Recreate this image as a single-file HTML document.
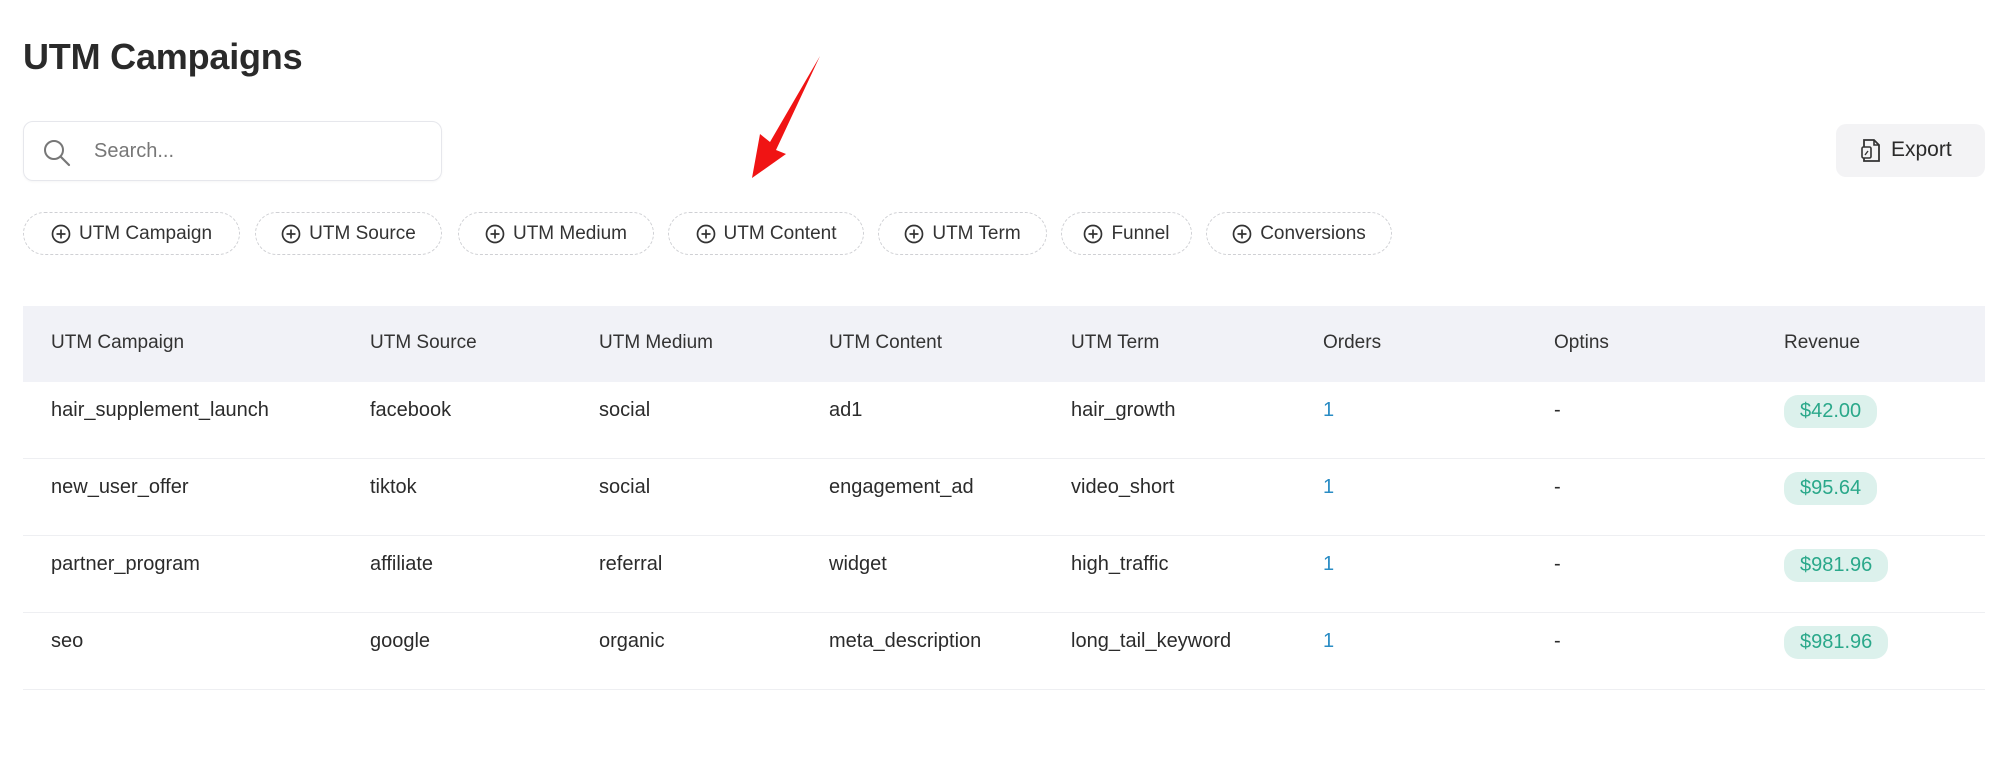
<!DOCTYPE html>
<html><head><meta charset="utf-8"><style>
*{box-sizing:border-box;margin:0;padding:0}
body{width:1999px;height:780px;background:#fff;font-family:"Liberation Sans",Arial,sans-serif;color:#2b2b2b;position:relative;overflow:hidden}
.a{position:absolute}
h1{position:absolute;left:23px;top:36px;font-size:36px;font-weight:700;color:#2a2a2a;letter-spacing:-0.2px}
.search{left:23px;top:121px;width:419px;height:60px;border:1px solid #e6e7ec;border-radius:10px;box-shadow:0 1px 2px rgba(0,0,0,.04)}
.search span{position:absolute;left:70px;top:18px;font-size:20px;color:#777}
.export{left:1836px;top:124px;width:149px;height:53px;background:#f3f3f5;border-radius:10px;font-size:21px;color:#2a2a2a}
.export span{position:absolute;left:55px;top:14px}
.chip{top:212px;height:43px;border:1.5px dashed #cfd0d4;border-radius:22px;font-size:19px;color:#333;display:flex;align-items:center;justify-content:center;gap:8px}
.chip svg{flex:none}
.thead{left:23px;top:306px;width:1962px;height:76px;background:#f1f2f7}
.row{left:23px;width:1962px;border-bottom:1.5px solid #eeeff2}
.c{position:absolute;font-size:20px;color:#2b2b2b;white-space:nowrap}
.h{top:332px;font-size:19px;color:#333}
.blue{color:#2a8cc4}
.pill{background:#dcf1ec;color:#2aa88a;border-radius:14px;padding:5px 16px;font-size:20px}
</style></head><body>
<h1>UTM Campaigns</h1>
<div class="a search">
<svg class="a" style="left:18px;top:16px" width="30" height="30" viewBox="0 0 30 30"><circle cx="12" cy="12" r="9" fill="none" stroke="#777" stroke-width="2"/><line x1="18.5" y1="18.5" x2="27" y2="27" stroke="#777" stroke-width="2.2" stroke-linecap="round"/></svg>
<span>Search...</span></div>
<div class="a export">
<svg class="a" style="left:24px;top:14px" width="22" height="26" viewBox="0 0 22 26"><path d="M4 2h10l5 5v16H4z" fill="none" stroke="#333" stroke-width="1.8"/><path d="M14 2v5h5" fill="none" stroke="#333" stroke-width="1.6"/><rect x="2" y="9" width="9" height="11" rx="1.5" fill="#f3f3f5" stroke="#333" stroke-width="1.6"/><path d="M5 17l3-4" stroke="#333" stroke-width="1.4"/></svg>
<span>Export</span></div>

<svg class="a" style="left:740px;top:50px" width="90" height="135" viewBox="0 0 90 135"><path d="M80 6 L36 100 L46 104 L12 128 L20 84 L30 92 Z" fill="#f01414"/></svg>

<div class="a chip" style="left:23px;width:217px"><svg width="20" height="20" viewBox="0 0 20 20"><circle cx="10" cy="10" r="8.5" fill="none" stroke="#333" stroke-width="1.7"/><path d="M10 5.5v9M5.5 10h9" stroke="#333" stroke-width="1.7"/></svg>UTM Campaign</div>
<div class="a chip" style="left:255px;width:187px"><svg width="20" height="20" viewBox="0 0 20 20"><circle cx="10" cy="10" r="8.5" fill="none" stroke="#333" stroke-width="1.7"/><path d="M10 5.5v9M5.5 10h9" stroke="#333" stroke-width="1.7"/></svg>UTM Source</div>
<div class="a chip" style="left:458px;width:196px"><svg width="20" height="20" viewBox="0 0 20 20"><circle cx="10" cy="10" r="8.5" fill="none" stroke="#333" stroke-width="1.7"/><path d="M10 5.5v9M5.5 10h9" stroke="#333" stroke-width="1.7"/></svg>UTM Medium</div>
<div class="a chip" style="left:668px;width:196px"><svg width="20" height="20" viewBox="0 0 20 20"><circle cx="10" cy="10" r="8.5" fill="none" stroke="#333" stroke-width="1.7"/><path d="M10 5.5v9M5.5 10h9" stroke="#333" stroke-width="1.7"/></svg>UTM Content</div>
<div class="a chip" style="left:878px;width:169px"><svg width="20" height="20" viewBox="0 0 20 20"><circle cx="10" cy="10" r="8.5" fill="none" stroke="#333" stroke-width="1.7"/><path d="M10 5.5v9M5.5 10h9" stroke="#333" stroke-width="1.7"/></svg>UTM Term</div>
<div class="a chip" style="left:1061px;width:131px"><svg width="20" height="20" viewBox="0 0 20 20"><circle cx="10" cy="10" r="8.5" fill="none" stroke="#333" stroke-width="1.7"/><path d="M10 5.5v9M5.5 10h9" stroke="#333" stroke-width="1.7"/></svg>Funnel</div>
<div class="a chip" style="left:1206px;width:186px"><svg width="20" height="20" viewBox="0 0 20 20"><circle cx="10" cy="10" r="8.5" fill="none" stroke="#333" stroke-width="1.7"/><path d="M10 5.5v9M5.5 10h9" stroke="#333" stroke-width="1.7"/></svg>Conversions</div>

<div class="a thead"></div>
<div class="a row" style="top:382px;height:77px"></div>
<div class="a row" style="top:459px;height:77px"></div>
<div class="a row" style="top:536px;height:77px"></div>
<div class="a row" style="top:613px;height:77px"></div>

<div class="c h" style="left:51px">UTM Campaign</div>
<div class="c h" style="left:370px">UTM Source</div>
<div class="c h" style="left:599px">UTM Medium</div>
<div class="c h" style="left:829px">UTM Content</div>
<div class="c h" style="left:1071px">UTM Term</div>
<div class="c h" style="left:1323px">Orders</div>
<div class="c h" style="left:1554px">Optins</div>
<div class="c h" style="left:1784px">Revenue</div>

<div class="c" style="top:399px;left:51px">hair_supplement_launch</div>
<div class="c" style="top:399px;left:370px">facebook</div>
<div class="c" style="top:399px;left:599px">social</div>
<div class="c" style="top:399px;left:829px">ad1</div>
<div class="c" style="top:399px;left:1071px">hair_growth</div>
<div class="c blue" style="top:399px;left:1323px">1</div>
<div class="c" style="top:399px;left:1554px">-</div>
<div class="c pill" style="top:395px;left:1784px">$42.00</div>

<div class="c" style="top:476px;left:51px">new_user_offer</div>
<div class="c" style="top:476px;left:370px">tiktok</div>
<div class="c" style="top:476px;left:599px">social</div>
<div class="c" style="top:476px;left:829px">engagement_ad</div>
<div class="c" style="top:476px;left:1071px">video_short</div>
<div class="c blue" style="top:476px;left:1323px">1</div>
<div class="c" style="top:476px;left:1554px">-</div>
<div class="c pill" style="top:472px;left:1784px">$95.64</div>

<div class="c" style="top:553px;left:51px">partner_program</div>
<div class="c" style="top:553px;left:370px">affiliate</div>
<div class="c" style="top:553px;left:599px">referral</div>
<div class="c" style="top:553px;left:829px">widget</div>
<div class="c" style="top:553px;left:1071px">high_traffic</div>
<div class="c blue" style="top:553px;left:1323px">1</div>
<div class="c" style="top:553px;left:1554px">-</div>
<div class="c pill" style="top:549px;left:1784px">$981.96</div>

<div class="c" style="top:630px;left:51px">seo</div>
<div class="c" style="top:630px;left:370px">google</div>
<div class="c" style="top:630px;left:599px">organic</div>
<div class="c" style="top:630px;left:829px">meta_description</div>
<div class="c" style="top:630px;left:1071px">long_tail_keyword</div>
<div class="c blue" style="top:630px;left:1323px">1</div>
<div class="c" style="top:630px;left:1554px">-</div>
<div class="c pill" style="top:626px;left:1784px">$981.96</div>
</body></html>
